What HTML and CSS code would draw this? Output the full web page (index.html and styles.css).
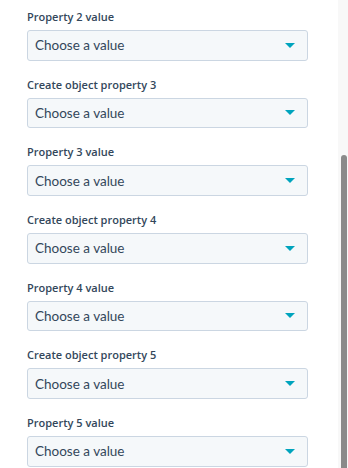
FILE: index.html
```html
<!DOCTYPE html>
<html lang="en">
<head>
<meta charset="UTF-8" />
<title>Object properties</title>
<link rel="stylesheet" href="styles.css">
</head>
<body>
  <div class="panel">
    <form class="fields">
      <div class="field">
        <label class="field-label">Property 2 value</label>
        <div class="select"><span>Choose a value</span><i class="caret"></i></div>
      </div>
      <div class="field">
        <label class="field-label">Create object property 3</label>
        <div class="select"><span>Choose a value</span><i class="caret"></i></div>
      </div>
      <div class="field">
        <label class="field-label">Property 3 value</label>
        <div class="select"><span>Choose a value</span><i class="caret"></i></div>
      </div>
      <div class="field">
        <label class="field-label">Create object property 4</label>
        <div class="select"><span>Choose a value</span><i class="caret"></i></div>
      </div>
      <div class="field">
        <label class="field-label">Property 4 value</label>
        <div class="select"><span>Choose a value</span><i class="caret"></i></div>
      </div>
      <div class="field">
        <label class="field-label">Create object property 5</label>
        <div class="select"><span>Choose a value</span><i class="caret"></i></div>
      </div>
      <div class="field">
        <label class="field-label">Property 5 value</label>
        <div class="select"><span>Choose a value</span><i class="caret"></i></div>
      </div>
    </form>

    <!-- fake scrollbar -->
    <div class="scroll-track">
      <div class="scroll-thumb"></div>
    </div>
  </div>
</body>
</html>
```

FILE: styles.css
```css
* {
  box-sizing: border-box;
}
html, body {
  margin: 0;
  padding: 0;
  height: 100%;
  overflow: hidden;
  background: #fff;
  font-family: 'Lato', 'Open Sans', sans-serif;
  color: #33475b;
}

.panel {
  display: flex;
  height: 100%;
}

/* Form column */
.fields {
  flex: 1;
  padding: 9px 0 0 27px;
}

.field {
  width: 281px;
  margin-bottom: 16px;
}

.field-label {
  display: block;
  font-family: 'Open Sans', sans-serif;
  font-size: 11px;
  font-weight: 600;
  line-height: 16px;
  margin-bottom: 5px;
}

/* Select box */
.select {
  display: flex;
  align-items: center;
  justify-content: space-between;
  height: 30.67px;
  padding: 0 12px 0 7px;
  background: #f5f8fa;
  border: 1px solid #cbd6e2;
  border-radius: 3px;
  font-size: 13.5px;
}

.caret {
  width: 0;
  height: 0;
  border-left: 5px solid transparent;
  border-right: 5px solid transparent;
  border-top: 5px solid #00a4bd;
}

/* Scrollbar */
.scroll-track {
  width: 10px;
  background: #f8f8f8;
  padding: 155px 1px 0 3px;
}
.scroll-thumb {
  height: 100%;
  background: #8a8a8a;
  border-radius: 3px 3px 0 0;
}
```
